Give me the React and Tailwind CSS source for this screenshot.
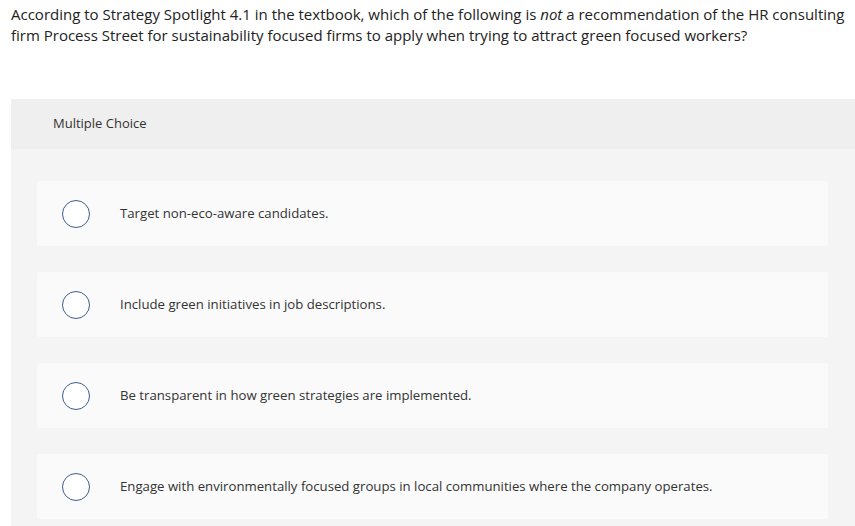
import React from 'react'

const choices = [
  'Target non-eco-aware candidates.',
  'Include green initiatives in job descriptions.',
  'Be transparent in how green strategies are implemented.',
  'Engage with environmentally focused groups in local communities where the company operates.',
]

export default function App() {
  return (
    <div className="min-h-screen bg-white font-['Open_Sans',Arial,sans-serif] text-[#222]">
      {/* Question */}
      <div className="pl-[11px] pr-[8px] pt-[4px] text-[15px] leading-[21px]">
        According to Strategy Spotlight 4.1 in the textbook, which of the following is <i>not</i> a recommendation of the HR consulting firm Process Street for sustainability focused firms to apply when trying to attract green focused workers?
      </div>

      {/* Answer panel */}
      <div className="ml-[11px] mt-[53px] bg-[#f4f4f4]">
        <div className="h-[50px] bg-[#efefef] pl-[42px] flex items-center text-[13px] text-[#333]">
          Multiple Choice
        </div>
        <div className="pl-[26px] pr-[27px] pt-[32px] pb-[20px] flex flex-col gap-[26px]">
          {choices.map((c) => (
            <div key={c} className="h-[65px] bg-[#fafafa] rounded-[3px] flex items-center pl-[25px]">
              <span className="w-[28px] h-[28px] rounded-full border-[1.5px] border-[#3d5d8c] bg-white shrink-0" />
              <span className="ml-[30px] text-[13.2px] text-[#333]">{c}</span>
            </div>
          ))}
        </div>
      </div>
    </div>
  )
}
